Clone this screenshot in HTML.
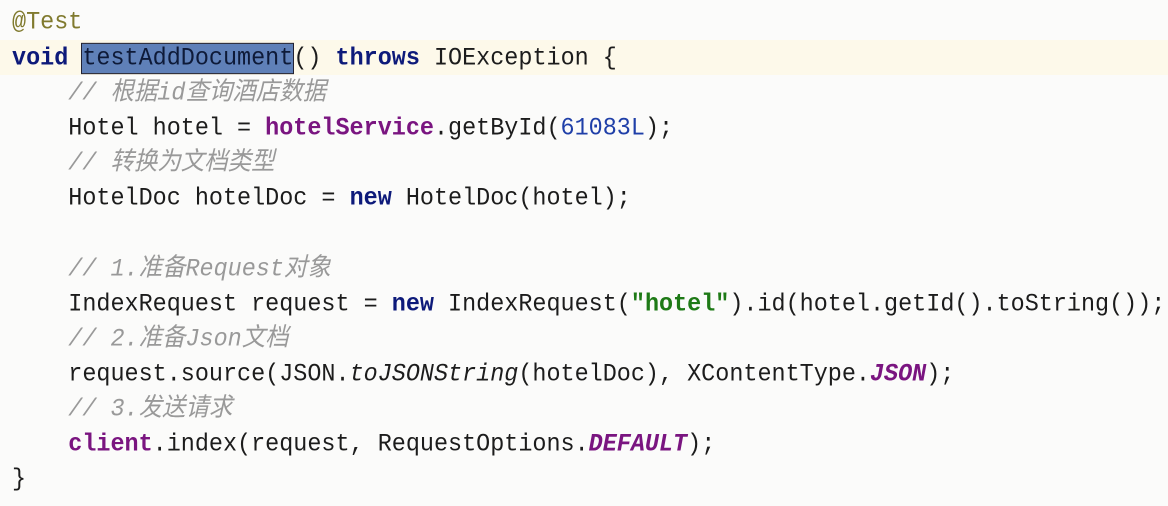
<!DOCTYPE html>
<html><head><meta charset="utf-8"><style>
body{margin:0;width:1168px;height:506px;background:#fbfbfa;overflow:hidden;position:relative}
.l{position:absolute;left:12px;height:35px;line-height:35px;font-family:"Liberation Mono","Noto Sans CJK SC",monospace;font-size:23.45px;color:#1c1c1c;white-space:pre;transform:scaleY(1.08)}
.k{color:#0d1a7a;font-weight:bold}
.c{color:#999;font-style:italic}
.a{color:#807a2e}
.f{color:#7a1580;font-weight:bold}
.n{color:#1f3fa8}
.s{color:#1e7a16;font-weight:bold}
.i{font-style:italic}
.sel{background:#5f80b8;color:#0e1a38;outline:1px solid #223}
#hl{position:absolute;left:0;top:40px;width:1168px;height:35px;background:#fdf9ea}
</style></head><body>
<div id="hl"></div>
<div class="l" style="top:5px"><span class="a">@Test</span></div>
<div class="l" style="top:41px"><span class="k">void</span> <span class="sel">testAddDocument</span>() <span class="k">throws</span> IOException {</div>
<div class="l" style="top:76px"><span class="c">    // 根据id查询酒店数据</span></div>
<div class="l" style="top:111px">    Hotel hotel = <span class="f">hotelService</span>.getById(<span class="n">61083L</span>);</div>
<div class="l" style="top:146px"><span class="c">    // 转换为文档类型</span></div>
<div class="l" style="top:181px">    HotelDoc hotelDoc = <span class="k">new</span> HotelDoc(hotel);</div>
<div class="l" style="top:252px"><span class="c">    // 1.准备Request对象</span></div>
<div class="l" style="top:287px">    IndexRequest request = <span class="k">new</span> IndexRequest(<span class="s">"hotel"</span>).id(hotel.getId().toString());</div>
<div class="l" style="top:322px"><span class="c">    // 2.准备Json文档</span></div>
<div class="l" style="top:357px">    request.source(JSON.<span class="i">toJSONString</span>(hotelDoc), XContentType.<span class="f i">JSON</span>);</div>
<div class="l" style="top:392px"><span class="c">    // 3.发送请求</span></div>
<div class="l" style="top:427px">    <span class="f">client</span>.index(request, RequestOptions.<span class="f i">DEFAULT</span>);</div>
<div class="l" style="top:462px">}</div>
</body></html>
